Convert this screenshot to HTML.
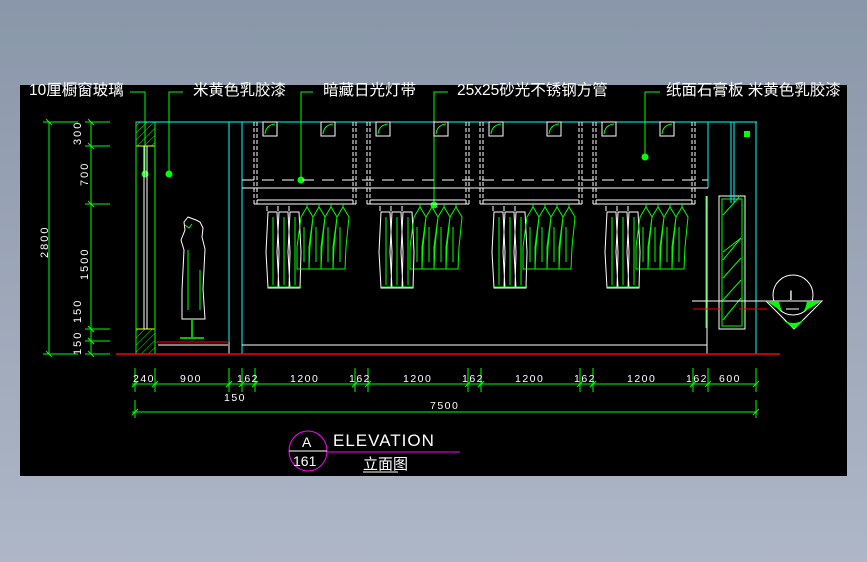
<!DOCTYPE html>
<html><head><meta charset="utf-8"><style>
html,body{margin:0;padding:0;width:867px;height:562px;overflow:hidden;background:linear-gradient(#8a96a9,#aeb7c7);}
svg{position:absolute;left:0;top:0}
text{font-family:"Liberation Sans","Noto Sans CJK SC",sans-serif;fill:#fff}
</style></head><body>
<svg width="867" height="562" viewBox="0 0 867 562">
<defs>
<pattern id="hy" width="5" height="5" patternUnits="userSpaceOnUse" patternTransform="rotate(45)"><line x1="0" y1="0" x2="0" y2="5" stroke="#0f0" stroke-width="1"/></pattern>
<g id="bay">
 <rect x="8" y="0" width="14" height="14" fill="none" stroke="#fff"/><path d="M10 12 Q11 3 20 2" stroke="#0f0" fill="none"/>
 <rect x="66" y="0" width="14" height="14" fill="none" stroke="#fff"/><path d="M68 12 Q69 3 78 2" stroke="#0f0" fill="none"/>
 <path d="M-1 0V82M2 0V82M98 0V82M101 0V82" stroke="#fff" stroke-dasharray="4 2"/>
 <path d="M2 78H98M-1 82H101" stroke="#fff"/>
 <g stroke="#fff" fill="none">
  <path d="M12 84v5M23 84v5M34 84v5"/>
  <path d="M13 90h9l2 40l-1 36h-10l-2-36z M24 90h9l2 40l-1 36h-10l-2-36z M35 90h9l2 40l-1 36h-10l-2-36z"/>
 </g>
 <g stroke="#0f0" fill="none">
  <path d="M13 165h33M18 95v68M29 95v68M40 95v68"/>
  <path d="M46 95l-4 30 0 22h12l1-22 3-30l-6-10z M58 95l-4 30 0 22h12l1-22 3-30l-6-10z M70 95l-4 30 0 22h12l1-22 3-30l-6-10z M82 95l-4 30 0 22h12l1-22 3-30l-6-10z"/>
  <path d="M52 85v-3M64 85v-3M76 85v-3M88 85v-3M49 105v35M61 105v35M73 105v35M85 105v35"/>
 </g>
</g>
</defs>
<rect x="20" y="85" width="827" height="391" fill="#000"/>
<g font-size="15.5">
<text x="29" y="95">10厘橱窗玻璃</text>
<text x="193" y="95">米黄色乳胶漆</text>
<text x="323" y="95">暗藏日光灯带</text>
<text x="457" y="95">25x25砂光不锈钢方管</text>
<text x="666" y="95">纸面石膏板 米黄色乳胶漆</text>
</g>
<g stroke="#0f0" fill="none">
<path d="M130 92H145V173M183 92H169V173M313 92H301V180M448 92H434V205M660 92H645V157"/>
</g>
<g fill="#0f0"><circle cx="145" cy="174" r="3.5"/><circle cx="169" cy="174" r="3.5"/><circle cx="301" cy="180" r="3.5"/><circle cx="434" cy="205" r="3.5"/><circle cx="645" cy="157" r="3.5"/></g>
<g stroke="#0f0">
<path d="M49 122V354M91 122V354M43 122H78M43 354H78M85 122H110M85 146H110M85 204H110M85 329H110M85 341H110M85 354H110"/>
<path d="M46 119l6 6M46 351l6 6M88 119l6 6M88 143l6 6M88 201l6 6M88 326l6 6M88 338l6 6M88 351l6 6"/>
</g>
<g font-size="11" letter-spacing="2">
<text transform="translate(48,258) rotate(-90)">2800</text>
<text transform="translate(81,145) rotate(-90)">300</text>
<text transform="translate(88,186) rotate(-90)">700</text>
<text transform="translate(88,280) rotate(-90)">1500</text>
<text transform="translate(81,323) rotate(-90)">150</text>
<text transform="translate(81,355) rotate(-90)">150</text>
</g>
<rect x="136" y="122" width="19" height="24" fill="url(#hy)" stroke="#ff0"/>
<rect x="136" y="329" width="19" height="25" fill="url(#hy)" stroke="#ff0"/>
<path d="M136 122V354M155 122V354" stroke="#0f0"/>
<path d="M144 146V329M147 146V329" stroke="#fff"/>
<path d="M136 122H757M229 122V345M242 122V354M756 122V354M708 122V188" stroke="#0ff"/>
<path d="M155 342H229V354M158 345H228M242 345H707M707 196V354" stroke="#fff" fill="none"/>
<path d="M155 342H229" stroke="#f00"/>
<g stroke="#fff" fill="none">
<path d="M188 217l-4 5 1 8-4 10 3 10-2 40 0 29h23l-2-30 2-40-3-12 1-9-3-6-4-2z"/>
</g>
<path d="M192 320V337M180 338H204" stroke="#0f0" stroke-width="1.5"/>
<path d="M185 225l4 3 3-4M188 250v60M200 270v40" stroke="#0f0" fill="none"/>
<path d="M242 188H708M242 180H708" stroke="#fff" stroke-dasharray="12 8"/>
<path d="M242 188H708" stroke="#fff"/>
<use href="#bay" x="255" y="122"/>
<use href="#bay" x="368" y="122"/>
<use href="#bay" x="481" y="122"/>
<use href="#bay" x="594" y="122"/>
<rect x="719" y="196" width="26" height="133" fill="none" stroke="#fff"/>
<rect x="722" y="199" width="20" height="127" fill="none" stroke="#0f0"/>
<path d="M723 215l18-20M723 260l18-22M723 278l18-20M723 300l18-20M723 320l18-22M723 252l18-14" stroke="#0f0"/>
<path d="M731 122V203M734 122V203" stroke="#0ff"/>
<path d="M706 196V328" stroke="#0f0"/>
<rect x="744" y="131" width="6" height="6" fill="#0f0"/>
<path d="M692 301H822" stroke="#fff"/>
<path d="M693 309H721M739 309H767" stroke="#f00"/>
<circle cx="793" cy="295" r="20" fill="none" stroke="#fff"/>
<path d="M766 301H822L794 329Z" fill="none" stroke="#fff"/>
<path d="M766 301L779 301Q780 308 783 312Z M822 301L807 301Q806 308 803 312Z M782 319Q793 327 805 319L794 329Z" fill="#0f0"/>
<text x="789" y="300" font-size="14">I</text>
<path d="M786 309h13" stroke="#fff"/>
<path d="M116 354H780" stroke="#f00" stroke-width="1.5"/>
<g stroke="#0f0">
<path d="M132 384H757M132 412H757"/>
<path d="M135 368V392M155 368V392M229 368V392M242 368V392M255 368V392M355 368V392M368 368V392M468 368V392M481 368V392M580 368V392M593 368V392M693 368V392M708 368V392M756 368V392M135 400V418M756 400V418"/>
<path d="M132 387l6-6M152 387l6-6M226 387l6-6M239 387l6-6M252 387l6-6M352 387l6-6M365 387l6-6M465 387l6-6M478 387l6-6M577 387l6-6M590 387l6-6M690 387l6-6M705 387l6-6M753 387l6-6M132 415l6-6M753 415l6-6"/>
</g>
<g font-size="10.5" letter-spacing="1.5">
<text x="133" y="382">240</text><text x="180" y="382">900</text>
<text x="237" y="382">162</text><text x="290" y="382">1200</text>
<text x="349" y="382">162</text><text x="403" y="382">1200</text>
<text x="462" y="382">162</text><text x="515" y="382">1200</text>
<text x="574" y="382">162</text><text x="627" y="382">1200</text>
<text x="686" y="382">162</text><text x="719" y="382">600</text>
<text x="224" y="401">150</text><text x="430" y="409">7500</text>
</g>
<ellipse cx="308" cy="451" rx="19" ry="20" fill="none" stroke="#f0f"/>
<path d="M289 451H327" stroke="#fff"/>
<path d="M327 452H460" stroke="#f0f"/>
<text x="302" y="447" font-size="14">A</text>
<text x="293" y="466" font-size="14">161</text>
<text x="333" y="446" font-size="17" letter-spacing="1">ELEVATION</text>
<text x="363" y="469" font-size="15">立面图</text>
<path d="M363 472H398" stroke="#fff"/>
</svg>
</body></html>
